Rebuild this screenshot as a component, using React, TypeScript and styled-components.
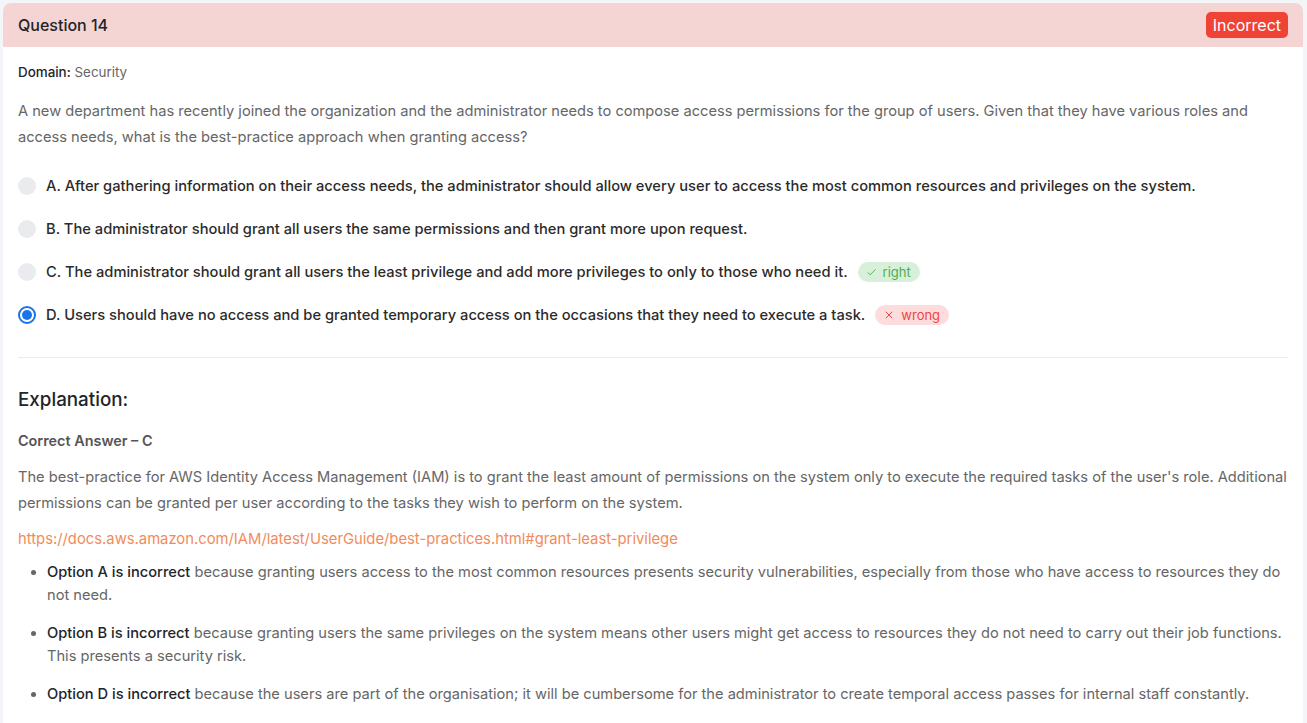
import React from 'react'
import styled, { createGlobalStyle } from 'styled-components'
import { Check, X } from 'lucide-react'

const GlobalStyle = createGlobalStyle`
  body {
    margin: 0;
    background: #f4f5f8;
    font-family: Inter, "Open Sans", sans-serif;
  }
`

const Page = styled.div`
  padding: 3px 4px 0 3px;
`

const Card = styled.div`
  background: #fff;
  border-radius: 8px 8px 0 0;
  overflow: hidden;
`

const Header = styled.div`
  height: 44px;
  background: #f5d5d4;
  display: flex;
  align-items: center;
  justify-content: space-between;
  padding: 0 15px;
`

const Title = styled.h5`
  margin: 0;
  font-size: 16px;
  font-weight: 500;
  color: #212529;
`

const StatusBadge = styled.span`
  background: #f04335;
  color: #fff;
  font-size: 16px;
  line-height: 22px;
  padding: 2px 7px;
  border-radius: 5px;
`

const Body = styled.div`
  padding: 17px 15px 40px 15px;
`

const Domain = styled.div`
  font-size: 13.4px;
  line-height: 16px;
  color: #666;
  & b {
    color: #212529;
    font-weight: 500;
  }
`

const Text = styled.p<{ $top?: number }>`
  margin: ${(p) => p.$top ?? 0}px 0 0 0;
  font-size: 14.65px;
  line-height: 26px;
  color: #666;
`

const Options = styled.div`
  margin-top: 23px;
  display: flex;
  flex-direction: column;
  gap: 17px;
`

const OptionRow = styled.label`
  display: flex;
  align-items: center;
  gap: 10px;
  height: 26px;
  font-size: 14.7px;
  font-weight: 500;
  color: #2b2b2b;
`

const Radio = styled.span<{ $checked?: boolean }>`
  width: 18px;
  height: 18px;
  border-radius: 50%;
  flex: none;
  box-sizing: border-box;
  background: ${(p) => (p.$checked ? '#fff' : '#e9ebee')};
  border: ${(p) => (p.$checked ? '2px solid #1a73e8' : 'none')};
  display: flex;
  align-items: center;
  justify-content: center;
  &::after {
    content: '';
    display: ${(p) => (p.$checked ? 'block' : 'none')};
    width: 10px;
    height: 10px;
    border-radius: 50%;
    background: #1a73e8;
  }
`

const Pill = styled.span<{ $kind: 'right' | 'wrong' }>`
  display: inline-flex;
  align-items: center;
  gap: 6px;
  height: 20px;
  padding: 0 9px 0 8px;
  border-radius: 10px;
  font-size: 13px;
  font-weight: 400;
  background: ${(p) => (p.$kind === 'right' ? '#d8efda' : '#fddcdc')};
  color: ${(p) => (p.$kind === 'right' ? '#4caf50' : '#ef4444')};
`

const Divider = styled.hr`
  margin: 29px 0 0 0;
  border: 0;
  border-top: 1px solid #ececec;
`

const Heading = styled.h4`
  margin: 28px 0 0 0;
  font-size: 18.8px;
  line-height: 28px;
  font-weight: 500;
  color: #212529;
`

const Subheading = styled.div`
  margin-top: 16px;
  font-size: 14.4px;
  line-height: 22px;
  font-weight: 600;
  color: #555;
`

const Link = styled.a`
  display: block;
  margin-top: 10px;
  font-size: 14.8px;
  line-height: 26px;
  color: #f28b5b;
  text-decoration: none;
`

const Bullets = styled.ul`
  margin: 9px 0 0 0;
  padding-left: 29px;
  display: flex;
  flex-direction: column;
  gap: 15px;
`

const Bullet = styled.li`
  font-size: 14.65px;
  line-height: 23px;
  color: #666;
  & b {
    color: #212529;
    font-weight: 500;
  }
`

type Option = {
  label: string
  checked?: boolean
  mark?: 'right' | 'wrong'
}

const options: Option[] = [
  { label: 'A. After gathering information on their access needs, the administrator should allow every user to access the most common resources and privileges on the system.' },
  { label: 'B. The administrator should grant all users the same permissions and then grant more upon request.' },
  { label: 'C. The administrator should grant all users the least privilege and add more privileges to only to those who need it.', mark: 'right' },
  { label: 'D. Users should have no access and be granted temporary access on the occasions that they need to execute a task.', checked: true, mark: 'wrong' },
]

export default function App() {
  return (
    <Page>
      <GlobalStyle />
      <Card>
        <Header>
          <Title>Question 14</Title>
          <StatusBadge>Incorrect</StatusBadge>
        </Header>
        <Body>
          <Domain><b>Domain:</b> Security</Domain>
          <Text $top={18}>
            A new department has recently joined the organization and the administrator needs to compose access permissions for the group of users. Given that they have various roles and access needs, what is the best-practice approach when granting access?
          </Text>
          <Options>
            {options.map((o) => (
              <OptionRow key={o.label}>
                <Radio $checked={o.checked} />
                <span>{o.label}</span>
                {o.mark === 'right' && <Pill $kind="right"><Check size={11} strokeWidth={2} />right</Pill>}
                {o.mark === 'wrong' && <Pill $kind="wrong"><X size={12} strokeWidth={2} />wrong</Pill>}
              </OptionRow>
            ))}
          </Options>
          <Divider />
          <Heading>Explanation:</Heading>
          <Subheading>Correct Answer – C</Subheading>
          <Text $top={12}>
            The best-practice for AWS Identity Access Management (IAM) is to grant the least amount of permissions on the system only to execute the required tasks of the user's role. Additional permissions can be granted per user according to the tasks they wish to perform on the system.
          </Text>
          <Link href="#">https://docs.aws.amazon.com/IAM/latest/UserGuide/best-practices.html#grant-least-privilege</Link>
          <Bullets>
            <Bullet><b>Option A is incorrect</b> because granting users access to the most common resources presents security vulnerabilities, especially from those who have access to resources they do not need.</Bullet>
            <Bullet><b>Option B is incorrect</b> because granting users the same privileges on the system means other users might get access to resources they do not need to carry out their job functions. This presents a security risk.</Bullet>
            <Bullet><b>Option D is incorrect</b> because the users are part of the organisation; it will be cumbersome for the administrator to create temporal access passes for internal staff constantly.</Bullet>
          </Bullets>
        </Body>
      </Card>
    </Page>
  )
}
